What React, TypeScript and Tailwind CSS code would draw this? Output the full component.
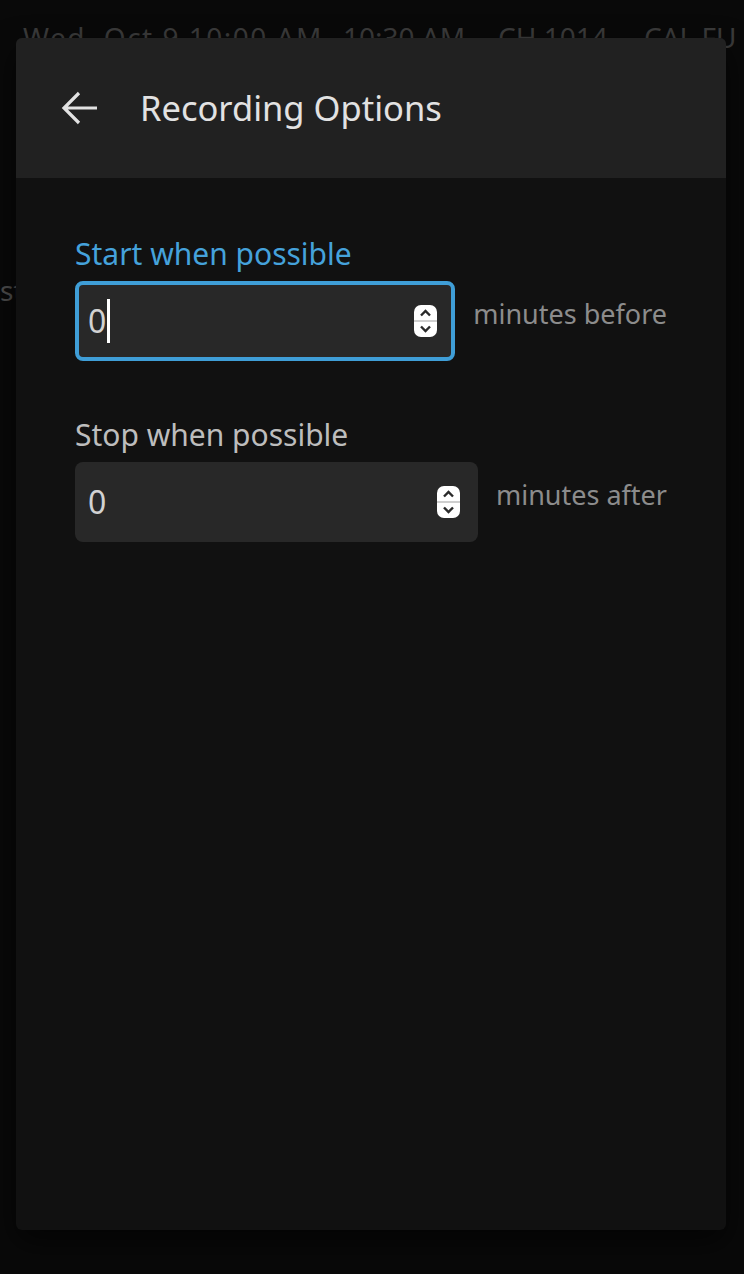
import React from "react";

function Spinner() {
  return (
    <svg width="23" height="32" viewBox="0 0 23 32" className="shrink-0">
      <rect x="0" y="0" width="23" height="32" rx="7" fill="#ffffff" />
      <line x1="0" y1="16" x2="23" y2="16" stroke="#cfcfcf" strokeWidth="2" />
      <polyline points="7,10.5 11.5,6 16,10.5" fill="none" stroke="#2a2a2a" strokeWidth="2.4" />
      <polyline points="7,21.5 11.5,26 16,21.5" fill="none" stroke="#2a2a2a" strokeWidth="2.4" />
    </svg>
  );
}

function Field({
  label,
  focused,
  unit,
}: {
  label: string;
  focused?: boolean;
  unit: string;
}) {
  return (
    <div className="flex flex-col">
      <div
        className={
          "text-[30px] leading-[36px] " +
          (focused ? "text-[#45a2db]" : "text-[#bdbdbd]")
        }
      >
        {label}
      </div>
      <div className="mt-[9px] flex items-center gap-[18px]">
        <div
          className={
            "flex h-[80px] flex-1 items-center rounded-[8px] border-4 bg-[#282828] pl-[9px] pr-[14px] " +
            (focused ? "border-[#3f9ed7]" : "border-transparent")
          }
        >
          <span className="text-[32px] leading-[40px] text-[#d2d2d2]">0</span>
          {focused && <span className="ml-[1px] h-[44px] w-[3px] bg-white" />}
          <div className="flex-1" />
          <Spinner />
        </div>
        <span className="-mt-[14px] text-[27px] leading-[34px] text-[#8c8c8c]">{unit}</span>
      </div>
    </div>
  );
}

export default function App() {
  return (
    <div className="relative h-[1274px] w-[744px] overflow-hidden bg-[#090909] font-['Noto_Sans',sans-serif]">
      {/* background content behind the dialog */}
      <div className="flex flex-col pt-[17px] text-[28px] leading-[40px] text-[#3b3b3b]">
        <div className="flex whitespace-nowrap pl-[23px]">
          <span className="w-[320px] tracking-[1.5px]">Wed, Oct 9 10:00 AM</span>
          <span className="w-[155px]">10:30 AM</span>
          <span className="w-[146px]">CH 1014</span>
          <span>CAL FU</span>
        </div>
        <div className="mt-[213px] text-[#4d4d4d]">st</div>
      </div>

      {/* dialog */}
      <div className="absolute left-[16px] top-[38px] flex h-[1192px] w-[710px] flex-col overflow-hidden rounded-[6px] bg-[#111111] shadow-[0_12px_30px_rgba(0,0,0,0.6)]">
        <div className="flex h-[140px] shrink-0 items-center bg-[#212121] pl-[45px]">
          <svg width="38" height="34" viewBox="0 0 38 34" className="shrink-0">
            <path
              d="M3 17 H36 M18 2 L3 17 L18 32"
              fill="none"
              stroke="#e2e2e2"
              strokeWidth="3.2"
            />
          </svg>
          <span className="ml-[41px] text-[34.5px] leading-[40px] text-[#e2e2e2]">
            Recording Options
          </span>
        </div>
        <div className="flex flex-col gap-[56px] px-[59px] pt-[58px]">
          <Field label="Start when possible" focused unit="minutes before" />
          <Field label="Stop when possible" unit="minutes after" />
        </div>
      </div>
    </div>
  );
}
